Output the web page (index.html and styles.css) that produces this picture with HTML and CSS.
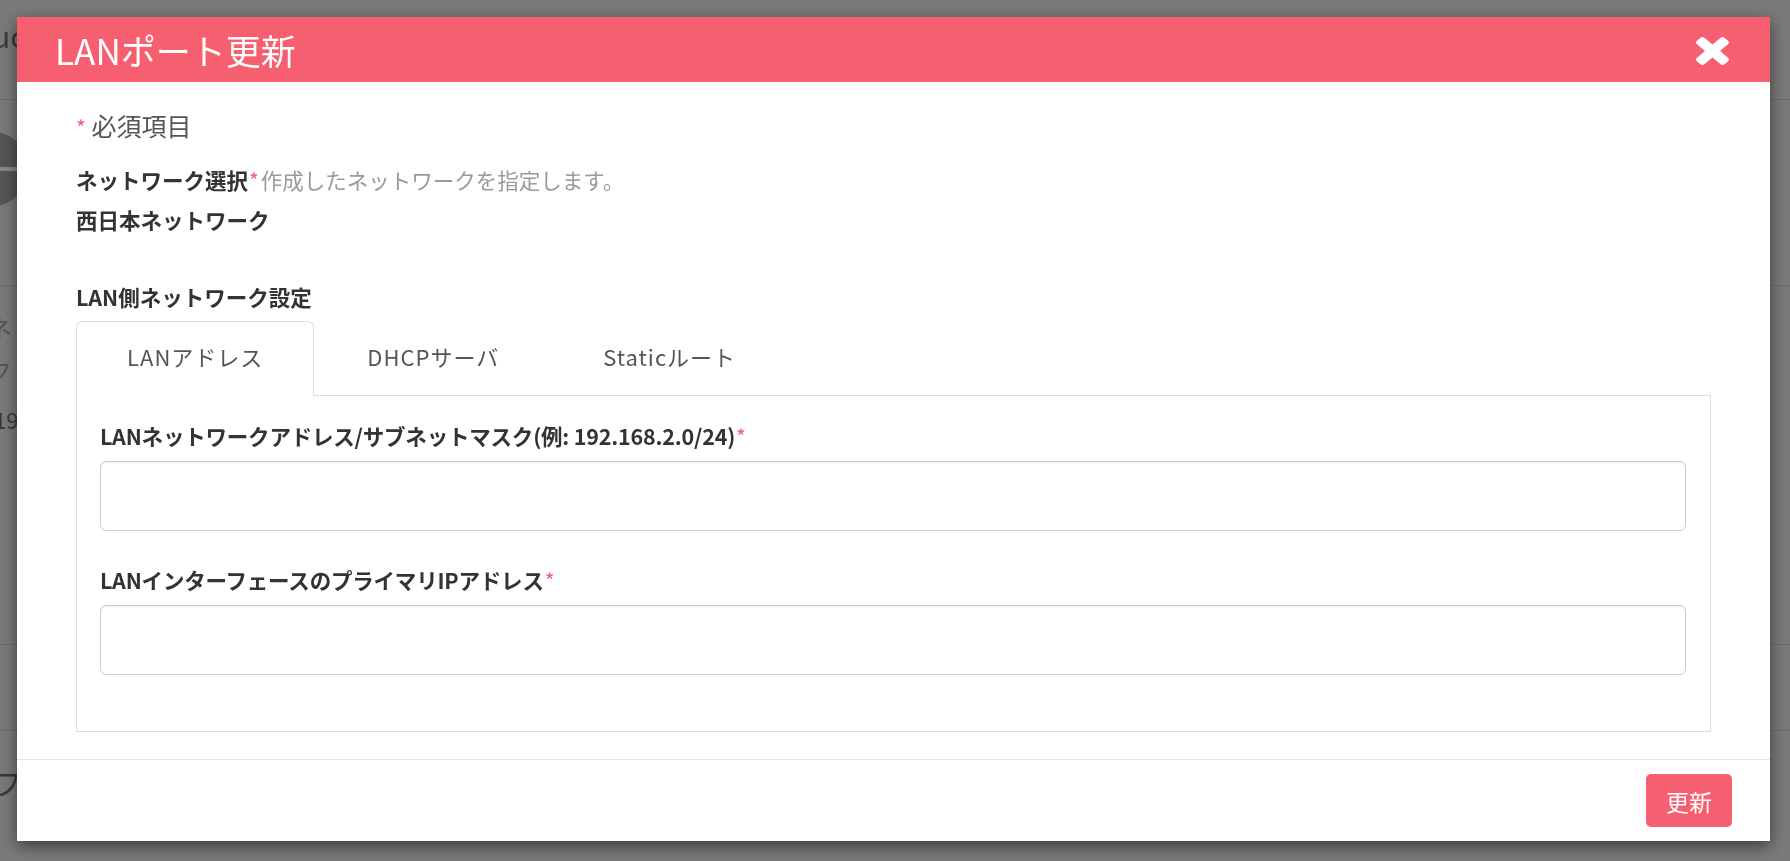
FILE: index.html
```html
<!DOCTYPE html>
<html lang="ja">
<head>
    <meta charset="UTF-8">
    <meta name="viewport" content="width=device-width, initial-scale=1.0">
    <title>LANポート更新</title>
    <link rel="stylesheet" href="styles.css">
</head>
<body>
    <!-- page behind the dialog, dimmed -->
    <div class="backdrop-page">
        <div class="bg-row bg-row-1"><span class="bg-text">uc</span></div>
        <div class="bg-row bg-row-2"><span class="bg-avatar"></span></div>
        <div class="bg-row bg-row-3">
            <span class="bg-text bg-small">ネ</span>
            <span class="bg-text bg-small">ク</span>
            <span class="bg-text bg-num">19</span>
        </div>
        <div class="bg-row bg-row-4"></div>
        <div class="bg-row bg-row-5"><span class="bg-text">フ</span></div>
    </div>

    <div class="modal">
        <div class="modal-header">
            <h2 class="modal-title">LANポート更新</h2>
            <button class="close-btn" type="button" aria-label="閉じる">
                <svg width="33" height="31" viewBox="302 238 1188 1316" preserveAspectRatio="none">
                    <path fill="#fff" d="M1490 1322q0 40-28 68l-136 136q-28 28-68 28t-68-28l-294-294-294 294q-28 28-68 28t-68-28l-136-136q-28-28-28-68t28-68l294-294-294-294q-28-28-28-68t28-68l136-136q28-28 68-28t68 28l294 294 294-294q28-28 68-28t68 28l136 136q28 28 28 68t-28 68l-294 294 294 294q28 28 28 68z"/>
                </svg>
            </button>
        </div>

        <div class="modal-body">
            <p class="required-note"><span class="req">*</span> 必須項目</p>

            <div class="field-static">
                <div class="field-label">ネットワーク選択<span class="req">*</span><span class="help">作成したネットワークを指定します。</span></div>
                <div class="field-value">西日本ネットワーク</div>
            </div>

            <div class="section-title">LAN側ネットワーク設定</div>

            <ul class="tabs">
                <li class="tab active">LANアドレス</li>
                <li class="tab">DHCPサーバ</li>
                <li class="tab">Staticルート</li>
            </ul>

            <div class="tab-content">
                <div class="form-group">
                    <label class="form-label">LANネットワークアドレス/サブネットマスク(例: 192.168.2.0/24)<span class="req">*</span></label>
                    <input class="form-input" type="text">
                </div>
                <div class="form-group">
                    <label class="form-label">LANインターフェースのプライマリIPアドレス<span class="req">*</span></label>
                    <input class="form-input" type="text">
                </div>
            </div>
        </div>

        <div class="modal-footer">
            <button class="btn-primary" type="button">更新</button>
        </div>
    </div>
</body>
</html>
```

FILE: styles.css
```css
* {
    margin: 0;
    padding: 0;
    box-sizing: border-box;
}

body {
    font-family: "Noto Sans CJK JP", "Noto Sans", sans-serif;
    background-color: #7a7a7a;
    height: 861px;
    overflow: hidden;
    color: #333;
}

/* dimmed page behind */
.backdrop-page {
    width: 100%;
}

.bg-row {
    border-bottom: 1px solid #6c6c6c;
    display: flex;
    flex-direction: column;
    align-items: flex-start;
}

.bg-row-1 { height: 100px; padding-top: 20px; }
.bg-row-2 { height: 186px; padding-top: 32px; }
.bg-row-3 { height: 359px; padding-top: 28px; gap: 17px; }
.bg-row-4 { height: 86px; }
.bg-row-5 { height: 80px; border-bottom: none; padding-top: 36px; }

.bg-text {
    font-size: 30px;
    line-height: 1;
    color: #3a3a3a;
    margin-left: -8px;
}

.bg-small {
    font-size: 26px;
    color: #555;
    margin-left: -14px;
}

.bg-num {
    font-size: 22px;
    margin-left: -6px;
    margin-top: 8px;
}

.bg-avatar {
    width: 74px;
    height: 74px;
    border-radius: 50%;
    background: linear-gradient(#555 0 47%, #888 47% 53%, #555 53%);
    margin-left: -45px;
}

/* dialog */
.modal {
    position: fixed;
    top: 17px;
    left: 17px;
    width: 1753px;
    background: #fff;
    box-shadow: 0 5px 15px rgba(0, 0, 0, 0.5);
}

.modal-header {
    height: 65px;
    background: #f65f6f;
    display: flex;
    align-items: center;
    justify-content: space-between;
    padding: 0 41px 0 38px;
}

.modal-title {
    font-size: 35px;
    font-weight: 400;
    color: #fff;
    line-height: 1;
}

.close-btn {
    background: none;
    border: none;
    display: flex;
    cursor: pointer;
}

.modal-body {
    padding: 28px 59px 27px 59px;
}

.req {
    color: #f65f6f;
    font-weight: 400;
    font-size: 21px;
    line-height: 1;
    margin-left: 1px;
}

.required-note {
    font-size: 25px;
    line-height: 30px;
    color: #555;
}

.required-note .req {
    margin-left: 0;
}

.field-static {
    margin-top: 20px;
}

.field-label,
.field-value {
    font-size: 21.5px;
    font-weight: 700;
    line-height: 40px;
    color: #333;
}

.help {
    font-weight: 400;
    color: #9a9a9a;
    font-size: 21.5px;
    margin-left: 2px;
}

.section-title {
    margin-top: 42px;
    font-size: 21.5px;
    font-weight: 700;
    line-height: 30px;
}

.tabs {
    list-style: none;
    display: flex;
    margin-top: 9px;
    border-bottom: 1px solid #ddd;
}

.tab {
    padding: 0 50px 5px;
    line-height: 68px;
    font-size: 22px;
    letter-spacing: 1px;
    color: #555;
    margin-right: 2px;
    margin-bottom: -1px;
    border: 1px solid transparent;
    border-radius: 6px 6px 0 0;
}

.tab.active {
    border-color: #ddd;
    border-bottom-color: #fff;
    background: #fff;
}

.tab-content {
    border: 1px solid #ddd;
    border-top: none;
    padding: 25px 24px 56px 23px;
}

.form-group + .form-group {
    margin-top: 34px;
}

.form-label {
    display: block;
    font-size: 21.5px;
    font-weight: 700;
    line-height: 30px;
    margin-bottom: 10px;
    color: #333;
}

.form-label:first-child {
    letter-spacing: -0.2px;
}

.form-input {
    display: block;
    width: 100%;
    height: 70px;
    border: 1px solid #ccc;
    border-radius: 6px;
    box-shadow: inset 0 1px 1px rgba(0, 0, 0, 0.075);
    font-size: 20px;
    padding: 0 14px;
}

.modal-footer {
    border-top: 1px solid #e5e5e5;
    padding: 14px 38px;
    display: flex;
    justify-content: flex-end;
}

.btn-primary {
    width: 86px;
    height: 53px;
    background: #f65f6f;
    color: #fff;
    border: none;
    border-radius: 5px;
    font-family: "Noto Sans CJK JP", sans-serif;
    font-size: 23px;
}
```
